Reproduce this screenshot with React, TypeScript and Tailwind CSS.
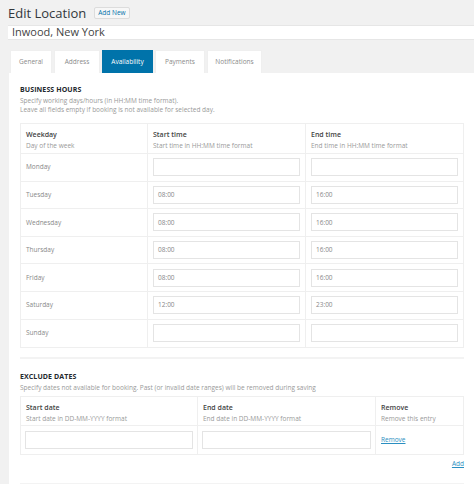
import React from "react";

const tabs = ["General", "Address", "Availability", "Payments", "Notifications"];
const tabWidths = ["w-[42px]", "w-[46px]", "w-[51px]", "w-[50px]", "w-[55px]"];

const days: { name: string; start: string; end: string }[] = [
  { name: "Monday", start: "", end: "" },
  { name: "Tuesday", start: "08:00", end: "16:00" },
  { name: "Wednesday", start: "08:00", end: "16:00" },
  { name: "Thursday", start: "08:00", end: "16:00" },
  { name: "Friday", start: "08:00", end: "16:00" },
  { name: "Saturday", start: "12:00", end: "23:00" },
  { name: "Sunday", start: "", end: "" },
];

function Field({ value }: { value: string }) {
  return (
    <div className="h-[18px] w-full bg-white border border-[#e4e4e4] flex items-center px-[4px] text-[6.5px] text-[#888]">
      {value}
    </div>
  );
}

function HeadCell({ title, sub, last }: { title: string; sub: string; last?: boolean }) {
  return (
    <div className={`px-[5px] pt-[6px] ${last ? "" : "border-r border-[#efefef]"}`}>
      <div className="text-[7px] font-semibold text-[#444] leading-[10px]">{title}</div>
      <div className="text-[6.5px] text-[#999] leading-[10px] mt-[1px]">{sub}</div>
    </div>
  );
}

export default function App() {
  return (
    <div className="w-[474px] h-[484px] overflow-hidden bg-[#f1f1f1] font-['Open_Sans',sans-serif]">
      {/* header */}
      <div className="flex items-center gap-[8px] pl-[8px] pt-[4px] h-[22px]">
        <h1 className="text-[13px] text-[#32373c] leading-none">Edit Location</h1>
        <span className="bg-[#f7f7f7] border border-[#dcdcdc] text-[#0073aa] text-[6.5px] px-[3px] h-[12px] flex items-center rounded-[2px]">
          Add New
        </span>
      </div>

      <div className="ml-[8px] mt-[3px] h-[15px] bg-white border-y border-[#e6e6e6] flex items-center pl-[4px] text-[11px] text-[#444]">
        Inwood, New York
      </div>

      {/* tabs */}
      <div className="flex gap-[2px] pl-[10px] pt-[10px] h-[33px] items-end">
        {tabs.map((t, i) => (
          <div
            key={t}
            className={`${tabWidths[i]} h-[23px] flex items-center justify-center text-[6.5px] ${
              t === "Availability"
                ? "bg-[#0073aa] text-white"
                : "bg-white text-[#8a8a8a] border-t border-x border-[#efefef]"
            }`}
          >
            {t}
          </div>
        ))}
      </div>

      {/* panel */}
      <div className="ml-[9px] bg-white h-[411px] pl-[11px] pr-[10px] pt-[12px]">
        <div className="text-[7px] font-bold text-[#23282d] uppercase leading-[10px] tracking-[0.1px]">Business hours</div>
        <div className="text-[6.5px] text-[#999] leading-[9px] mt-[1px]">Specify working days/hours (in HH:MM time format).</div>
        <div className="text-[6.5px] text-[#999] leading-[9px]">Leave all fields empty if booking is not available for selected day.</div>

        <div className="mt-[9px] border border-[#efefef]">
          <div className="grid grid-cols-[127px_158px_1fr] h-[30px] border-b border-[#efefef]">
            <HeadCell title="Weekday" sub="Day of the week" />
            <HeadCell title="Start time" sub="Start time in HH:MM time format" />
            <HeadCell title="End time" sub="End time in HH:MM time format" last />
          </div>
          {days.map((d, i) => (
            <div
              key={d.name}
              className={`grid grid-cols-[127px_158px_1fr] h-[27.6px] ${i < days.length - 1 ? "border-b border-[#efefef]" : ""}`}
            >
              <div className="px-[5px] flex items-center text-[6.5px] text-[#888] border-r border-[#efefef]">{d.name}</div>
              <div className="px-[5px] flex items-center border-r border-[#efefef]">
                <Field value={d.start} />
              </div>
              <div className="px-[5px] flex items-center">
                <Field value={d.end} />
              </div>
            </div>
          ))}
        </div>

        <div className="mt-[9px] h-[2px] bg-[#f3f3f3]" />

        <div className="mt-[13px] text-[7px] font-bold text-[#23282d] uppercase leading-[10px] tracking-[0.1px]">Exclude dates</div>
        <div className="text-[6.5px] text-[#999] leading-[9px] mt-[1px]">
          Specify dates not available for booking. Past (or invalid date ranges) will be removed during saving
        </div>

        <div className="mt-[4px] border border-[#efefef]">
          <div className="grid grid-cols-[177px_178px_1fr] h-[29px] border-b border-[#efefef]">
            <HeadCell title="Start date" sub="Start date in DD-MM-YYYY format" />
            <HeadCell title="End date" sub="End date in DD-MM-YYYY format" />
            <HeadCell title="Remove" sub="Remove this entry" last />
          </div>
          <div className="grid grid-cols-[177px_178px_1fr] h-[28px]">
            <div className="px-[4px] flex items-center border-r border-[#efefef]">
              <Field value="" />
            </div>
            <div className="px-[4px] flex items-center border-r border-[#efefef]">
              <Field value="" />
            </div>
            <div className="px-[5px] flex items-center">
              <span className="text-[6.5px] text-[#2a8fc1] underline">Remove</span>
            </div>
          </div>
        </div>

        <div className="flex justify-end mt-[4px] h-[10px] items-center">
          <span className="text-[6.5px] text-[#2a8fc1] underline">Add</span>
        </div>
        <div className="mt-[14px] h-[2px] bg-[#f3f3f3]" />
      </div>
    </div>
  );
}
